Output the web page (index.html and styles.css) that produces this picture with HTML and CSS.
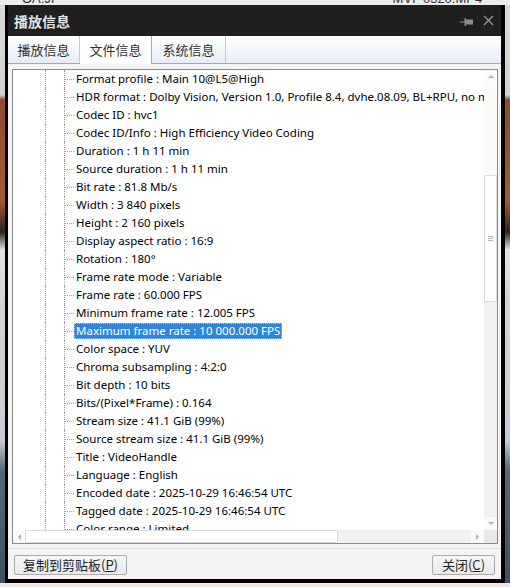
FILE: index.html
```html
<!DOCTYPE html>
<html lang="zh-CN">
<head>
<meta charset="UTF-8">
<meta name="viewport" content="width=device-width, initial-scale=1.0">
<title>播放信息</title>
<link rel="stylesheet" href="styles.css">
</head>
<body>

  <div class="backdrop-top">
    <span class="file-a">OA.JP</span>
    <span class="file-b">MVI_0320.MP4</span>
  </div>

  <div class="window">
    <div class="titlebar">
      <span class="title">播放信息</span>
      <span class="title-btns">
        <svg class="pin" width="13" height="10" viewBox="0 0 13 10">
          <path d="M0 5h5" stroke="#8c8c8c" stroke-width="1"/>
          <rect x="4.5" y="1" width="1.5" height="8" fill="#8c8c8c"/>
          <rect x="6" y="2.5" width="7" height="5" fill="#8c8c8c"/>
        </svg>
        <svg class="close" width="11" height="11" viewBox="0 0 11 11">
          <path d="M1 1L10 10M10 1L1 10" stroke="#9a9a9a" stroke-width="1.3"/>
        </svg>
      </span>
    </div>

    <div class="tabbar">
      <div class="tab">播放信息</div>
      <div class="tab active">文件信息</div>
      <div class="tab">系统信息</div>
    </div>

    <div class="page">
      <div class="listbox">
        <div class="view">
          <div class="row"><i class="ind1"></i><i class="ind2"></i><i class="branch"></i><span class="label">Format profile : Main 10@L5@High</span></div>
          <div class="row"><i class="ind1"></i><i class="ind2"></i><i class="branch"></i><span class="label">HDR format : Dolby Vision, Version 1.0, Profile 8.4, dvhe.08.09, BL+RPU, no metadata compression, HDR10 compatible</span></div>
          <div class="row"><i class="ind1"></i><i class="ind2"></i><i class="branch"></i><span class="label">Codec ID : hvc1</span></div>
          <div class="row"><i class="ind1"></i><i class="ind2"></i><i class="branch"></i><span class="label">Codec ID/Info : High Efficiency Video Coding</span></div>
          <div class="row"><i class="ind1"></i><i class="ind2"></i><i class="branch"></i><span class="label">Duration : 1 h 11 min</span></div>
          <div class="row"><i class="ind1"></i><i class="ind2"></i><i class="branch"></i><span class="label">Source duration : 1 h 11 min</span></div>
          <div class="row"><i class="ind1"></i><i class="ind2"></i><i class="branch"></i><span class="label">Bit rate : 81.8 Mb/s</span></div>
          <div class="row"><i class="ind1"></i><i class="ind2"></i><i class="branch"></i><span class="label">Width : 3 840 pixels</span></div>
          <div class="row"><i class="ind1"></i><i class="ind2"></i><i class="branch"></i><span class="label">Height : 2 160 pixels</span></div>
          <div class="row"><i class="ind1"></i><i class="ind2"></i><i class="branch"></i><span class="label">Display aspect ratio : 16:9</span></div>
          <div class="row"><i class="ind1"></i><i class="ind2"></i><i class="branch"></i><span class="label">Rotation : 180°</span></div>
          <div class="row"><i class="ind1"></i><i class="ind2"></i><i class="branch"></i><span class="label">Frame rate mode : Variable</span></div>
          <div class="row"><i class="ind1"></i><i class="ind2"></i><i class="branch"></i><span class="label">Frame rate : 60.000 FPS</span></div>
          <div class="row"><i class="ind1"></i><i class="ind2"></i><i class="branch"></i><span class="label">Minimum frame rate : 12.005 FPS</span></div>
          <div class="row selected"><i class="ind1"></i><i class="ind2"></i><i class="branch"></i><span class="label">Maximum frame rate : 10 000.000 FPS</span></div>
          <div class="row"><i class="ind1"></i><i class="ind2"></i><i class="branch"></i><span class="label">Color space : YUV</span></div>
          <div class="row"><i class="ind1"></i><i class="ind2"></i><i class="branch"></i><span class="label">Chroma subsampling : 4:2:0</span></div>
          <div class="row"><i class="ind1"></i><i class="ind2"></i><i class="branch"></i><span class="label">Bit depth : 10 bits</span></div>
          <div class="row"><i class="ind1"></i><i class="ind2"></i><i class="branch"></i><span class="label">Bits/(Pixel*Frame) : 0.164</span></div>
          <div class="row"><i class="ind1"></i><i class="ind2"></i><i class="branch"></i><span class="label">Stream size : 41.1 GiB (99%)</span></div>
          <div class="row"><i class="ind1"></i><i class="ind2"></i><i class="branch"></i><span class="label">Source stream size : 41.1 GiB (99%)</span></div>
          <div class="row"><i class="ind1"></i><i class="ind2"></i><i class="branch"></i><span class="label">Title : VideoHandle</span></div>
          <div class="row"><i class="ind1"></i><i class="ind2"></i><i class="branch"></i><span class="label">Language : English</span></div>
          <div class="row"><i class="ind1"></i><i class="ind2"></i><i class="branch"></i><span class="label">Encoded date : 2025-10-29 16:46:54 UTC</span></div>
          <div class="row"><i class="ind1"></i><i class="ind2"></i><i class="branch"></i><span class="label">Tagged date : 2025-10-29 16:46:54 UTC</span></div>
          <div class="row"><i class="ind1"></i><i class="ind2"></i><i class="branch"></i><span class="label">Color range : Limited</span></div>
        </div>

        <div class="vscroll">
          <div class="arrow"><i class="tri-up"></i></div>
          <div class="track-top"></div>
          <div class="vthumb"><i class="grip"></i></div>
          <div class="track-rest"></div>
          <div class="arrow"><i class="tri-down"></i></div>
        </div>

        <div class="hscroll">
          <div class="arrow"><i class="tri-left"></i></div>
          <div class="hthumb"></div>
          <div class="track-rest"></div>
          <div class="arrow"><i class="tri-right"></i></div>
        </div>

        <div class="corner"></div>
      </div>
    </div>

    <div class="footer">
      <button class="btn btn-copy">复制到剪贴板(<u>P</u>)</button>
      <button class="btn btn-close">关闭(<u>C</u>)</button>
    </div>
  </div>

  <div class="backdrop-bottom"></div>

</body>
</html>
```

FILE: styles.css
```css
  body {
    margin: 0;
    width: 510px;
    height: 587px;
    overflow: hidden;
    font-family: "Noto Sans", "Noto Sans CJK SC", sans-serif;
    background: linear-gradient(#dadada 0, #d2d2d2 95px, #8c4a2c 100px, #a45a34 200px, #2a2320 232px,
      #e4e4e4 250px, #d4d4d4 300px, #c9cdd2 440px, #56687a 470px, #3e4f60 587px);
  }

  /* desktop behind the dialog */
  .backdrop-top {
    height: 5px;
    overflow: hidden;
    display: flex;
    background: #ececec;
    font-family: "Liberation Sans", sans-serif;
    font-size: 13px;
    line-height: 14px;
    color: #333;
  }
  .backdrop-top span {
    margin-top: -8px;
  }
  .file-a {
    margin-left: 22px;
  }
  .file-b {
    margin-left: 333px;
  }
  .backdrop-bottom {
    height: 4px;
    background: #f2e6de;
  }

  .window {
    margin-left: 5px;
    width: 500px;
    height: 578px;
    box-sizing: border-box;
    padding: 0 4px 4px 3px;
    background: #000;
    display: flex;
    flex-direction: column;
  }

  .titlebar {
    height: 31px;
    flex: none;
    background: #1f1f1f;
    display: flex;
    align-items: center;
    padding: 0 0 0 6px;
  }
  .title {
    font-family: "Noto Sans CJK SC", sans-serif;
    font-size: 14px;
    font-weight: bold;
    color: #e2e2e2;
  }
  .title-btns {
    margin-left: auto;
    display: flex;
    align-items: center;
    gap: 10px;
    padding-right: 7px;
  }
  .pin {
    margin-top: 2px;
  }

  .tabbar {
    height: 27px;
    flex: none;
    display: flex;
    border-bottom: 1px solid #a8a8a8;
    background: linear-gradient(#ffffff, #e7ecf6);
  }
  .tab {
    width: 71px;
    border-right: 1px solid #c6cad2;
    font-family: "Noto Sans CJK SC", sans-serif;
    font-size: 13px;
    line-height: 27px;
    text-align: center;
    color: #333;
  }
  .tab.active {
    background: #fff;
    height: 28px;
    margin-bottom: -1px;
    border-right-color: #a8a8a8;
  }
  .tab:nth-child(3) {
    width: 73px;
  }

  .page {
    flex: none;
    background: #f4f4f4;
    padding: 5px 3px 4px 4px;
    border-bottom: 1px solid #e2e2e2;
  }

  .listbox {
    height: 475px;
    box-sizing: border-box;
    border: 1px solid #8b8b8b;
    background: #fff;
    display: grid;
    grid-template-columns: 1fr 13px;
    grid-template-rows: 1fr 13px;
  }

  .view {
    overflow: hidden;
  }
  .row {
    height: 18px;
    display: flex;
    align-items: center;
    white-space: nowrap;
    font-family: "Noto Sans", sans-serif;
    font-size: 11.5px;
    color: #000;
  }
  .ind1,
  .ind2 {
    flex: none;
    height: 18px;
    border-right: 1px dotted #a0a0a0;
  }
  .ind1 {
    width: 32px;
  }
  .ind2 {
    width: 18px;
  }
  .branch {
    flex: none;
    width: 9px;
    height: 1px;
    background: repeating-linear-gradient(to right, #a0a0a0 0 1px, transparent 1px 2px);
  }
  .label {
    padding: 0 2px;
    line-height: 16px;
  }
  .row.selected .label {
    background: #2f86d8;
    color: #fff;
    outline: 1px dotted #9cc8f0;
    outline-offset: -1px;
  }

  /* scrollbars */
  .vscroll {
    display: flex;
    flex-direction: column;
    background: #f1f1f1;
  }
  .hscroll {
    display: flex;
    background: #f1f1f1;
  }
  .corner {
    background: #e8e8e8;
  }
  .arrow {
    flex: none;
    width: 13px;
    height: 13px;
    display: flex;
    align-items: center;
    justify-content: center;
    background: #fbfbfb;
  }
  .track-top {
    height: 92px;
    background: #fafafa;
  }
  .track-rest {
    flex: 1;
  }
  .vthumb {
    height: 127px;
    box-sizing: border-box;
    border: 1px solid #dcdcdc;
    background: #fdfdfd;
    display: flex;
    align-items: center;
    justify-content: center;
  }
  .grip {
    width: 5px;
    height: 5px;
    background: repeating-linear-gradient(#b4b4b4 0 1px, transparent 1px 2px);
  }
  .hthumb {
    width: 313px;
    margin-left: -1px;
    box-sizing: border-box;
    border: 1px solid #dcdcdc;
    background: #fdfdfd;
  }
  .tri-up,
  .tri-down,
  .tri-left,
  .tri-right {
    width: 0;
    height: 0;
    border: 3px solid transparent;
  }
  .tri-up {
    border-bottom-color: #b0b0b0;
    margin-top: -3px;
  }
  .tri-down {
    border-top-color: #b0b0b0;
    margin-bottom: -3px;
  }
  .tri-left {
    border-right-color: #b0b0b0;
    margin-left: -3px;
  }
  .tri-right {
    border-left-color: #b0b0b0;
    margin-right: -3px;
  }

  .footer {
    flex: 1;
    background: #f4f4f4;
    display: flex;
    justify-content: space-between;
    align-items: flex-start;
    padding: 6px 6px 0 6px;
  }
  .btn {
    height: 20px;
    padding: 0;
    border: 1px solid #acacac;
    border-radius: 2px;
    background: linear-gradient(#f7f7f7, #e8e8e8);
    font-family: "Noto Sans CJK SC", sans-serif;
    font-size: 13px;
    line-height: 18px;
    color: #222;
  }
  .btn-copy {
    width: 113px;
  }
  .btn-close {
    width: 63px;
  }
```
